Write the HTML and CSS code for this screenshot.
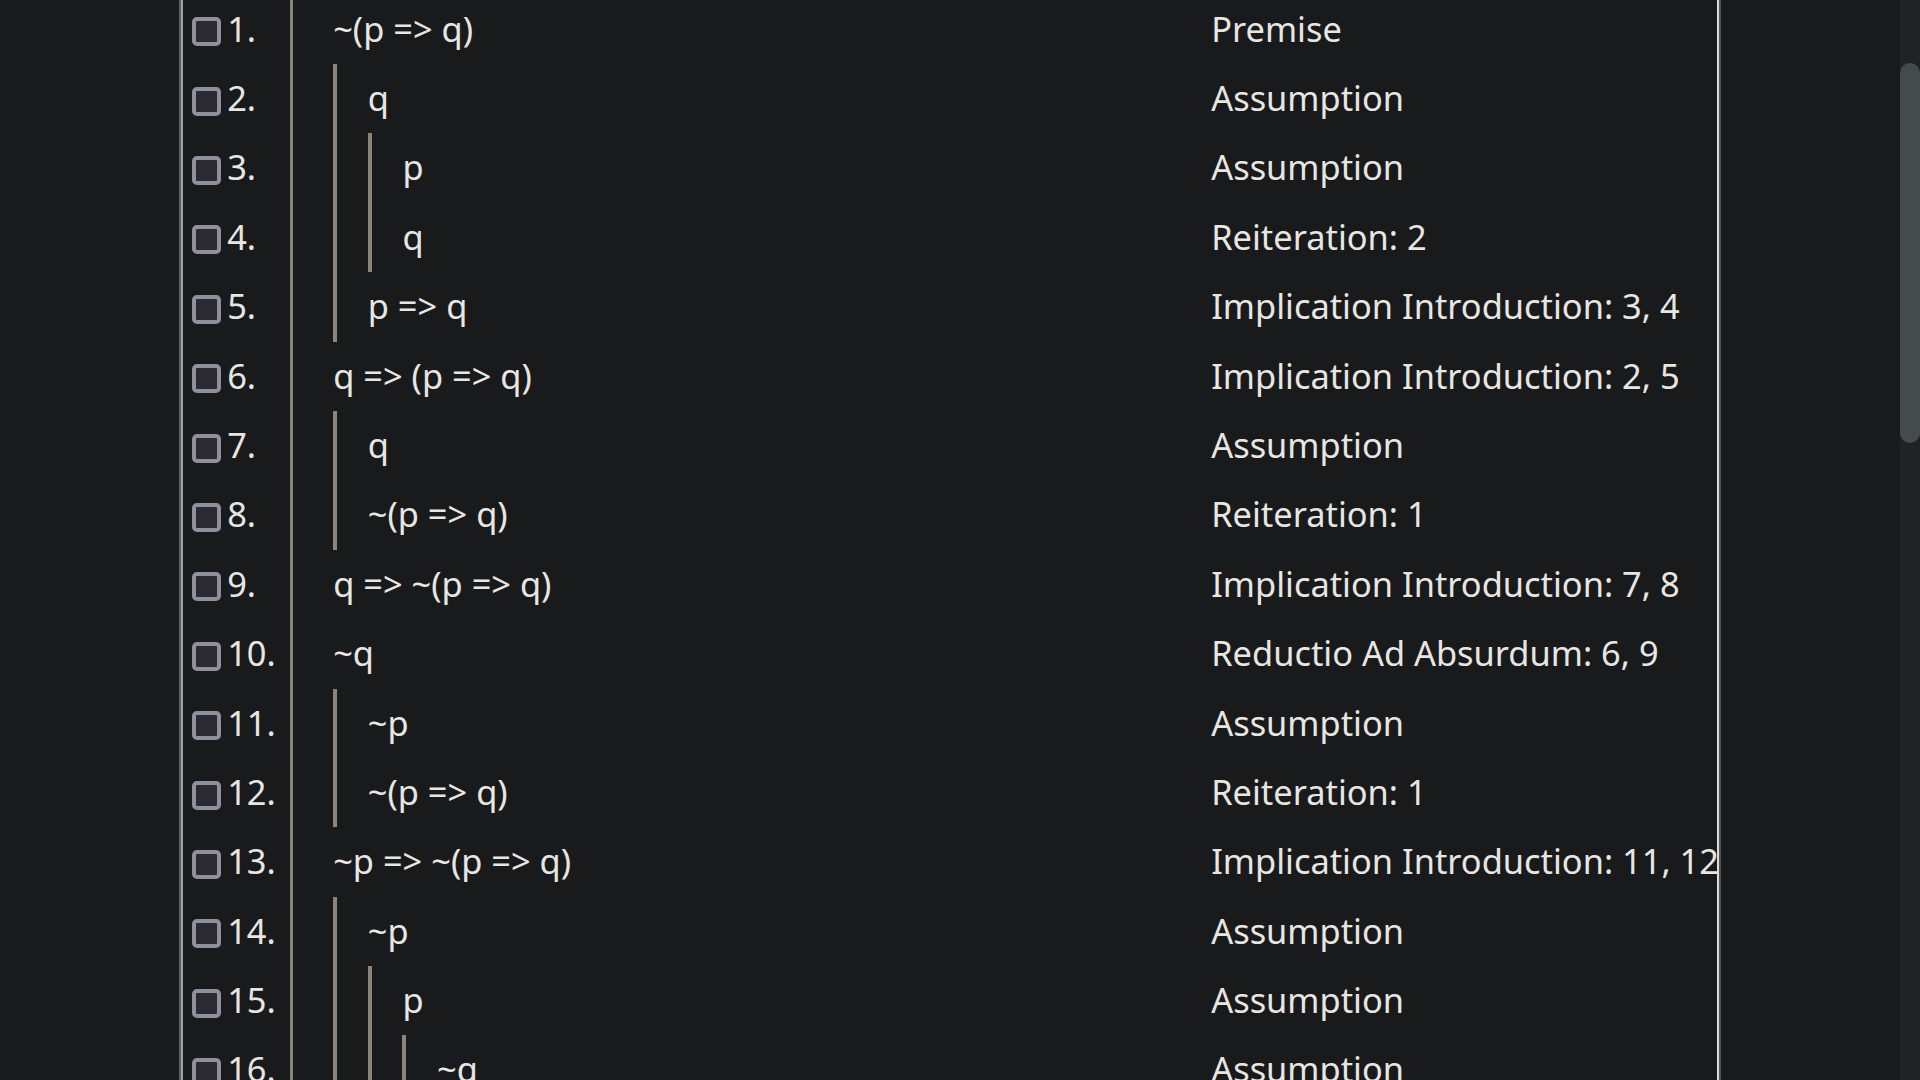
FILE: index.html
```html
<!DOCTYPE html>
<html>
<head>
<meta charset="utf-8">
<link rel="stylesheet" href="styles.css">
</head>
<body>
<div class="page">
  <main class="main">
    <div class="panel">
      <div class="row"><span class="cb"></span><span class="num">1.</span><span class="formula">~(p =&gt; q)</span><span class="just">Premise</span></div>
      <div class="row"><span class="cb"></span><span class="num">2.</span><span class="formula"><span class="bar"></span>q</span><span class="just">Assumption</span></div>
      <div class="row"><span class="cb"></span><span class="num">3.</span><span class="formula"><span class="bar"></span><span class="bar"></span>p</span><span class="just">Assumption</span></div>
      <div class="row"><span class="cb"></span><span class="num">4.</span><span class="formula"><span class="bar"></span><span class="bar"></span>q</span><span class="just">Reiteration: 2</span></div>
      <div class="row"><span class="cb"></span><span class="num">5.</span><span class="formula"><span class="bar"></span>p =&gt; q</span><span class="just">Implication Introduction: 3, 4</span></div>
      <div class="row"><span class="cb"></span><span class="num">6.</span><span class="formula">q =&gt; (p =&gt; q)</span><span class="just">Implication Introduction: 2, 5</span></div>
      <div class="row"><span class="cb"></span><span class="num">7.</span><span class="formula"><span class="bar"></span>q</span><span class="just">Assumption</span></div>
      <div class="row"><span class="cb"></span><span class="num">8.</span><span class="formula"><span class="bar"></span>~(p =&gt; q)</span><span class="just">Reiteration: 1</span></div>
      <div class="row"><span class="cb"></span><span class="num">9.</span><span class="formula">q =&gt; ~(p =&gt; q)</span><span class="just">Implication Introduction: 7, 8</span></div>
      <div class="row"><span class="cb"></span><span class="num">10.</span><span class="formula">~q</span><span class="just">Reductio Ad Absurdum: 6, 9</span></div>
      <div class="row"><span class="cb"></span><span class="num">11.</span><span class="formula"><span class="bar"></span>~p</span><span class="just">Assumption</span></div>
      <div class="row"><span class="cb"></span><span class="num">12.</span><span class="formula"><span class="bar"></span>~(p =&gt; q)</span><span class="just">Reiteration: 1</span></div>
      <div class="row"><span class="cb"></span><span class="num">13.</span><span class="formula">~p =&gt; ~(p =&gt; q)</span><span class="just">Implication Introduction: 11, 12</span></div>
      <div class="row"><span class="cb"></span><span class="num">14.</span><span class="formula"><span class="bar"></span>~p</span><span class="just">Assumption</span></div>
      <div class="row"><span class="cb"></span><span class="num">15.</span><span class="formula"><span class="bar"></span><span class="bar"></span>p</span><span class="just">Assumption</span></div>
      <div class="row"><span class="cb"></span><span class="num">16.</span><span class="formula"><span class="bar"></span><span class="bar"></span><span class="bar"></span>~q</span><span class="just">Assumption</span></div>
      <div class="row"><span class="cb"></span><span class="num">17.</span><span class="formula"><span class="bar"></span><span class="bar"></span><span class="bar"></span>~(p =&gt; q)</span><span class="just">Reiteration: 1</span></div>
    </div>
  </main>
  <div class="scrollbar"><div class="thumb"></div></div>
</div>
</body>
</html>
```
FILE: styles.css
```css
html, body {
  margin: 0;
  padding: 0;
  background: #181a1b;
  overflow: hidden;
}
.page {
  display: flex;
  width: 1920px;
  height: 1080px;
  overflow: hidden;
  font-family: "Noto Sans", "Open Sans", sans-serif;
  font-size: 34.4px;
  color: #e8e6e3;
}
.main {
  width: 1900px;
  height: 1080px;
  overflow: hidden;
  padding-left: 179px;
  box-sizing: border-box;
}
.panel {
  width: 1542px;
  box-sizing: border-box;
  margin-top: -5.4px;
  border-left: 2px solid #5c6063;
  border-right: 2px solid #505456;
  box-shadow: inset 2px 0 0 #9ea2a5, inset -2px 0 0 #dcdcdc;
  padding-left: 2px;
  padding-right: 2px;
}
.row {
  display: flex;
  align-items: flex-start;
  height: 69.4px;
}
.cb {
  flex: none;
  width: 29px;
  height: 29px;
  box-sizing: border-box;
  margin: 22.7px 6.5px 0 8.7px;
  border: 4px solid #8f8f9d;
  border-radius: 5px;
  background: #2b2a33;
}
.num {
  flex: none;
  width: 63px;
  height: 100%;
  border-right: 3px solid #8b8478;
  line-height: 68.7px;
  white-space: nowrap;
}
.formula {
  flex: none;
  display: flex;
  width: 878px;
  height: 100%;
  padding-left: 40px;
  line-height: 68.7px;
  white-space: nowrap;
}
.bar {
  flex: none;
  width: 34.6px;
  height: 100%;
  box-sizing: border-box;
  border-left: 4px solid #8b8478;
}
.just {
  flex: none;
  line-height: 68.7px;
  white-space: nowrap;
}
.scrollbar {
  flex: none;
  width: 20px;
  height: 1080px;
  background: #202324;
}
.thumb {
  margin-top: 63px;
  width: 20px;
  height: 380px;
  border-radius: 10px;
  background: #454a4d;
}
```
